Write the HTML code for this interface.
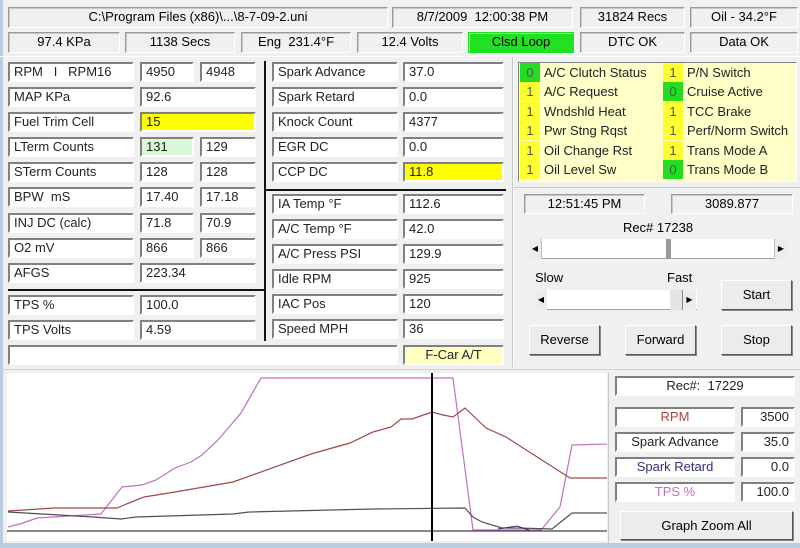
<!DOCTYPE html>
<html><head><meta charset="utf-8"><style>
*{margin:0;padding:0;box-sizing:border-box}
body{width:800px;height:548px;background:#f0f0f0;font-family:"Liberation Sans",Arial,sans-serif;font-size:13px;color:#000;position:relative;overflow:hidden}
.b{position:absolute;border:1px solid;border-color:#9a9a9a #fff #fff #9a9a9a;box-shadow:inset 1px 1px 0 #c8c8c8;background:#f0f0f0;text-align:center;line-height:18px;white-space:nowrap}
.c{position:absolute;background:#fff;border:2px solid;border-color:#808080 #fff #fff #808080;padding-left:4px;line-height:16px;white-space:nowrap;height:20px;color:#222}
.btn{position:absolute;background:#ececec;border:1px solid;border-color:#fff #555 #555 #fff;box-shadow:1px 1px 0 #888;text-align:center;line-height:28px;height:30px}
.ind{position:absolute;width:20px;height:19px;text-align:center;line-height:19px;background:#ffff30;color:#555}
.g{background:#22dd22}
.lt{position:absolute;line-height:19px;white-space:nowrap;color:#222}
</style></head><body>
<div style="position:absolute;left:0;top:0;width:3px;height:548px;background:#b8cde0"></div>
<div style="position:absolute;left:0;top:543px;width:800px;height:5px;background:#b8cde0"></div>
<div class="b" style="left:8px;top:7px;width:380px;height:21px">C:\Program Files (x86)\...\8-7-09-2.uni</div>
<div class="b" style="left:392px;top:7px;width:181px;height:21px">8/7/2009&nbsp; 12:00:38 PM</div>
<div class="b" style="left:580px;top:7px;width:105px;height:21px">31824 Recs</div>
<div class="b" style="left:690px;top:7px;width:108px;height:21px">Oil - 34.2°F</div>
<div class="b" style="left:8px;top:32px;width:112px;height:21px">97.4 KPa</div>
<div class="b" style="left:125px;top:32px;width:110px;height:21px">1138 Secs</div>
<div class="b" style="left:241px;top:32px;width:110px;height:21px">Eng&nbsp; 231.4°F</div>
<div class="b" style="left:357px;top:32px;width:106px;height:21px">12.4 Volts</div>
<div class="b" style="left:468px;top:32px;width:106px;height:21px;background:#22e022;border-color:#22e022">Clsd Loop</div>
<div class="b" style="left:580px;top:32px;width:105px;height:21px">DTC OK</div>
<div class="b" style="left:690px;top:32px;width:108px;height:21px">Data OK</div>
<div style="position:absolute;left:0;top:56px;width:800px;height:1px;background:#fff"></div>
<div class="c" style="left:8px;top:62px;width:126px">RPM &nbsp; I &nbsp; RPM16</div>
<div class="c" style="left:140px;top:62px;width:54px">4950</div>
<div class="c" style="left:200px;top:62px;width:56px">4948</div>
<div class="c" style="left:8px;top:87px;width:126px">MAP KPa</div>
<div class="c" style="left:140px;top:87px;width:116px">92.6</div>
<div class="c" style="left:8px;top:112px;width:126px">Fuel Trim Cell</div>
<div class="c" style="left:140px;top:112px;width:116px;background:#ffff00">15</div>
<div class="c" style="left:8px;top:137px;width:126px">LTerm Counts</div>
<div class="c" style="left:140px;top:137px;width:54px;background:#d8f8d8">131</div>
<div class="c" style="left:200px;top:137px;width:56px">129</div>
<div class="c" style="left:8px;top:162px;width:126px">STerm Counts</div>
<div class="c" style="left:140px;top:162px;width:54px">128</div>
<div class="c" style="left:200px;top:162px;width:56px">128</div>
<div class="c" style="left:8px;top:187px;width:126px">BPW&nbsp; mS</div>
<div class="c" style="left:140px;top:187px;width:54px">17.40</div>
<div class="c" style="left:200px;top:187px;width:56px">17.18</div>
<div class="c" style="left:8px;top:213px;width:126px">INJ DC (calc)</div>
<div class="c" style="left:140px;top:213px;width:54px">71.8</div>
<div class="c" style="left:200px;top:213px;width:56px">70.9</div>
<div class="c" style="left:8px;top:238px;width:126px">O2 mV</div>
<div class="c" style="left:140px;top:238px;width:54px">866</div>
<div class="c" style="left:200px;top:238px;width:56px">866</div>
<div class="c" style="left:8px;top:263px;width:126px">AFGS</div>
<div class="c" style="left:140px;top:263px;width:116px">223.34</div>
<div style="position:absolute;left:8px;top:289px;width:258px;height:2px;background:#111"></div>
<div class="c" style="left:8px;top:295px;width:126px">TPS %</div>
<div class="c" style="left:140px;top:295px;width:116px">100.0</div>
<div class="c" style="left:8px;top:320px;width:126px">TPS Volts</div>
<div class="c" style="left:140px;top:320px;width:116px">4.59</div>
<div style="position:absolute;left:264px;top:61px;width:2px;height:280px;background:#111"></div>
<div class="c" style="left:272px;top:62px;width:126px">Spark Advance</div>
<div class="c" style="left:403px;top:62px;width:101px">37.0</div>
<div class="c" style="left:272px;top:87px;width:126px">Spark Retard</div>
<div class="c" style="left:403px;top:87px;width:101px">0.0</div>
<div class="c" style="left:272px;top:112px;width:126px">Knock Count</div>
<div class="c" style="left:403px;top:112px;width:101px">4377</div>
<div class="c" style="left:272px;top:137px;width:126px">EGR DC</div>
<div class="c" style="left:403px;top:137px;width:101px">0.0</div>
<div class="c" style="left:272px;top:162px;width:126px">CCP DC</div>
<div class="c" style="left:403px;top:162px;width:101px;background:#ffff00">11.8</div>
<div style="position:absolute;left:266px;top:189px;width:240px;height:2px;background:#111"></div>
<div class="c" style="left:272px;top:194px;width:126px">IA Temp °F</div>
<div class="c" style="left:403px;top:194px;width:101px">112.6</div>
<div class="c" style="left:272px;top:219px;width:126px">A/C Temp °F</div>
<div class="c" style="left:403px;top:219px;width:101px">42.0</div>
<div class="c" style="left:272px;top:244px;width:126px">A/C Press PSI</div>
<div class="c" style="left:403px;top:244px;width:101px">129.9</div>
<div class="c" style="left:272px;top:269px;width:126px">Idle RPM</div>
<div class="c" style="left:403px;top:269px;width:101px">925</div>
<div class="c" style="left:272px;top:294px;width:126px">IAC Pos</div>
<div class="c" style="left:403px;top:294px;width:101px">120</div>
<div class="c" style="left:272px;top:319px;width:126px">Speed MPH</div>
<div class="c" style="left:403px;top:319px;width:101px">36</div>
<div class="c" style="left:8px;top:345px;width:390px"></div>
<div class="c" style="left:403px;top:345px;width:101px;background:#ffffc0;text-align:center;padding:0">F-Car A/T</div>
<div style="position:absolute;left:512px;top:57px;width:1px;height:310px;background:#c8c8c8"></div>
<div style="position:absolute;left:513px;top:57px;width:1px;height:310px;background:#fff"></div>
<div style="position:absolute;left:518px;top:62px;width:279px;height:120px;background:#ffffc8;border:1px solid;border-color:#808080 #fff #fff #808080"></div>
<div class="ind g" style="left:520px;top:63px">0</div><div class="lt" style="left:544px;top:63px">A/C Clutch Status</div>
<div class="ind" style="left:520px;top:82px">1</div><div class="lt" style="left:544px;top:82px">A/C Request</div>
<div class="ind" style="left:520px;top:102px">1</div><div class="lt" style="left:544px;top:102px">Wndshld Heat</div>
<div class="ind" style="left:520px;top:121px">1</div><div class="lt" style="left:544px;top:121px">Pwr Stng Rqst</div>
<div class="ind" style="left:520px;top:141px">1</div><div class="lt" style="left:544px;top:141px">Oil Change Rst</div>
<div class="ind" style="left:520px;top:160px">1</div><div class="lt" style="left:544px;top:160px">Oil Level Sw</div>
<div class="ind" style="left:663px;top:63px">1</div><div class="lt" style="left:687px;top:63px">P/N Switch</div>
<div class="ind g" style="left:663px;top:82px">0</div><div class="lt" style="left:687px;top:82px">Cruise Active</div>
<div class="ind" style="left:663px;top:102px">1</div><div class="lt" style="left:687px;top:102px">TCC Brake</div>
<div class="ind" style="left:663px;top:121px">1</div><div class="lt" style="left:687px;top:121px">Perf/Norm Switch</div>
<div class="ind" style="left:663px;top:141px">1</div><div class="lt" style="left:687px;top:141px">Trans Mode A</div>
<div class="ind g" style="left:663px;top:160px">0</div><div class="lt" style="left:687px;top:160px">Trans Mode B</div>
<div style="position:absolute;left:514px;top:187px;width:286px;height:1px;background:#c8c8c8"></div>
<div class="b" style="left:524px;top:194px;width:121px;height:20px">12:51:45 PM</div>
<div class="b" style="left:671px;top:194px;width:122px;height:20px">3089.877</div>
<div style="position:absolute;left:529px;top:220px;width:258px;text-align:center">Rec# 17238</div>
<div style="position:absolute;left:529px;top:239px;width:258px;height:20px;background:#fff;border-bottom:1px solid #a0a0a0"></div>
<div style="position:absolute;left:529px;top:239px;width:13px;height:20px;background:#ececec;border-right:1px solid #bbb;font-size:8px;line-height:20px;text-align:center">◀</div>
<div style="position:absolute;left:774px;top:239px;width:13px;height:20px;background:#ececec;border-left:1px solid #bbb;font-size:8px;line-height:20px;text-align:center">▶</div>
<div style="position:absolute;left:666px;top:239px;width:5px;height:20px;background:#999"></div>
<div style="position:absolute;left:535px;top:270px">Slow</div>
<div style="position:absolute;left:667px;top:270px">Fast</div>
<div style="position:absolute;left:535px;top:290px;width:162px;height:20px;background:#fff;border-bottom:1px solid #a0a0a0"></div>
<div style="position:absolute;left:535px;top:290px;width:12px;height:20px;background:#ececec;font-size:8px;line-height:20px;text-align:center">◀</div>
<div style="position:absolute;left:670px;top:290px;width:12px;height:20px;background:#e4e4e4"></div>
<div style="position:absolute;left:682px;top:290px;width:14px;height:20px;background:#ececec;border-left:1px solid #888;font-size:8px;line-height:20px;text-align:center">▶</div>
<div class="btn" style="left:721px;top:280px;width:71px">Start</div>
<div class="btn" style="left:529px;top:325px;width:71px">Reverse</div>
<div class="btn" style="left:625px;top:325px;width:71px">Forward</div>
<div class="btn" style="left:721px;top:325px;width:71px">Stop</div>
<div style="position:absolute;left:0;top:369px;width:800px;height:1px;background:#d0d0d0"></div>
<svg style="position:absolute;left:7px;top:373px" width="600" height="168" viewBox="7 373 600 168">
<rect x="7" y="373" width="600" height="168" fill="#fff"/>
<line x1="7" y1="531" x2="607" y2="531" stroke="#111" stroke-width="1"/>
<polyline fill="none" stroke="#c070c0" stroke-width="1.2" points="8,527 23,523 37,518 101,514 122,487 142,485 156,480 175,468 191,462 202,455 218,440 241,413 261,378 453,378 473,530 541,530 560,507 572,445 609,444"/>
<polyline fill="none" stroke="#a04848" stroke-width="1.2" points="8,511 54,508 117,508 124,505 144,497 175,492 233,482 311,454 350,443 373,432 391,427 401,419 412,419 432,412 443,415 453,417 465,408 486,428 506,437 570,478 609,478"/>
<polyline fill="none" stroke="#505050" stroke-width="1.2" points="8,512 93,517 121,519 136,517 233,514 249,512 373,509 465,508 473,517 482,522 502,528 517,528 552,529 572,513 609,513"/>
<polyline fill="none" stroke="#303060" stroke-width="1" points="498,529 517,526 529,530"/>
<line x1="432" y1="373" x2="432" y2="541" stroke="#000" stroke-width="2"/>
</svg>
<div style="position:absolute;left:608px;top:373px;width:1px;height:170px;background:#c8c8c8"></div>
<div class="c" style="left:615px;top:376px;width:180px;text-align:center;padding:0;height:20px">Rec#:&nbsp; 17229</div>
<div class="c" style="left:615px;top:407px;width:120px;text-align:center;padding:0;color:#b04040">RPM</div>
<div class="c" style="left:741px;top:407px;width:54px;text-align:right;padding:0 4px 0 0">3500</div>
<div class="c" style="left:615px;top:432px;width:120px;text-align:center;padding:0">Spark Advance</div>
<div class="c" style="left:741px;top:432px;width:54px;text-align:right;padding:0 4px 0 0">35.0</div>
<div class="c" style="left:615px;top:457px;width:120px;text-align:center;padding:0;color:#303080">Spark Retard</div>
<div class="c" style="left:741px;top:457px;width:54px;text-align:right;padding:0 4px 0 0">0.0</div>
<div class="c" style="left:615px;top:482px;width:120px;text-align:center;padding:0;color:#c070c0">TPS %</div>
<div class="c" style="left:741px;top:482px;width:54px;text-align:right;padding:0 4px 0 0">100.0</div>
<div class="btn" style="left:620px;top:511px;width:173px;height:29px">Graph Zoom All</div>
</body></html>
